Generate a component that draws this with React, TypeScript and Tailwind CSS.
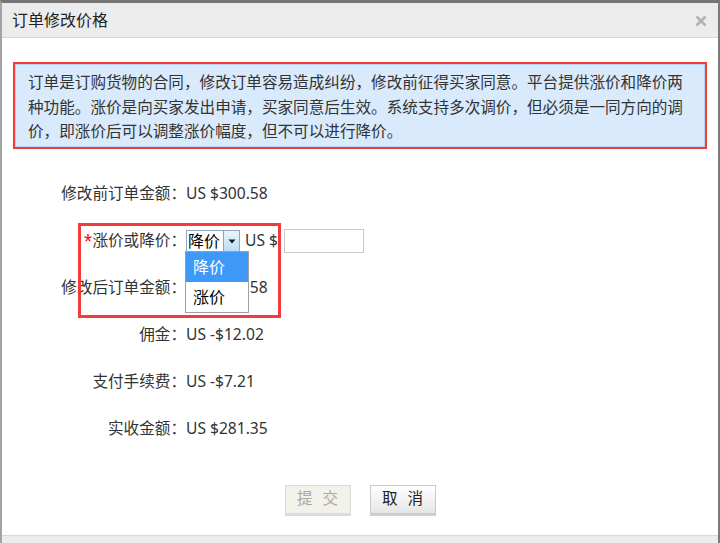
import { useState } from "react"

const rows = [
  { label: "修改前订单金额：", value: "US $300.58" },
  { label: "修改后订单金额：", value: "US $300.58" },
  { label: "佣金：", value: "US -$12.02" },
  { label: "支付手续费：", value: "US -$7.21" },
  { label: "实收金额：", value: "US $281.35" },
]

const App = () => {
  const [choice, setChoice] = useState("降价")
  const font = { fontFamily: '"Noto Sans", "Noto Sans CJK SC", sans-serif' }

  return (
    <div
      style={font}
      className="w-[720px] h-[543px] overflow-hidden flex flex-col bg-white text-[#333] border-t-[3px] border-t-[#757575] border-l-2 border-l-[#a3a3a3] border-r-2 border-r-[#7a7a7a]"
    >
      {/* header */}
      <div className="h-[35px] shrink-0 bg-[#ececec] border-b border-[#d9d9d9] flex items-center justify-between pl-[10px] pr-[11px]">
        <span className="text-[16px] text-[#222]">订单修改价格</span>
        <svg width="12" height="12" viewBox="0 0 12 12" className="mt-[2px]">
          <path d="M1.5 1.5 L10.5 10.5 M10.5 1.5 L1.5 10.5" stroke="#b3b3b3" strokeWidth="2.6" />
        </svg>
      </div>

      {/* body */}
      <div className="flex-1">
        <div className="mx-[11px] mt-[24px] border-2 border-[#f23b3b]">
          <div className="border border-[#b8d4ef] bg-[#d8eafc] pl-[12px] pr-[4px] pt-[5px] pb-[2px]">
            <p className="text-[15.6px] leading-[24.5px] w-[660px]">
              订单是订购货物的合同，修改订单容易造成纠纷，修改前征得买家同意。平台提供涨价和降价两种功能。涨价是向买家发出申请，买家同意后生效。系统支持多次调价，但必须是一同方向的调价，即涨价后可以调整涨价幅度，但不可以进行降价。
            </p>
          </div>
        </div>

        <div className="mt-[22px] text-[15.6px]">
          <div className="h-[47px] flex items-center">
            <span className="w-[184px] text-right">{rows[0].label}</span>
            <span>{rows[0].value}</span>
          </div>

          <div className="h-[47px] flex items-center relative">
            <span className="w-[184px] text-right">
              <span className="text-[#f00]">*</span>涨价或降价：
            </span>
            <div className="w-[54px] h-[22px] border border-[#8fa7bf] flex items-stretch bg-white">
              <span className="flex-1 text-[16px] leading-[20px] font-normal text-black pl-[1px]">{choice}</span>
              <span className="w-[16px] border-l border-[#7aa7cf] bg-gradient-to-b from-[#eaf5fd] to-[#bcdcf4] flex items-center justify-center">
                <svg width="8" height="5" viewBox="0 0 8 5">
                  <path d="M0.5 0.5 L7.5 0.5 L4 4.5 Z" fill="#1a1a1a" />
                </svg>
              </span>
            </div>
            <span className="ml-[5px]">US $</span>
            <input className="ml-[6px] w-[80px] h-[24px] border border-[#c8c8c8] outline-none" />

            {/* open dropdown */}
            <div className="absolute left-[183px] top-[33px] w-[64px] border border-[#a0a0a0] bg-white z-10 text-[16px]">
              {["降价", "涨价"].map((o) => (
                <div
                  key={o}
                  onClick={() => setChoice(o)}
                  className={
                    o === choice
                      ? "h-[30px] leading-[30px] pl-[7px] bg-[#3d98f8] text-white"
                      : "h-[30px] leading-[30px] pl-[7px] text-black"
                  }
                >
                  {o}
                </div>
              ))}
            </div>

            {/* red highlight */}
            <div className="absolute left-[76px] top-[5px] w-[203px] h-[95px] border-[3px] border-[#f33b3b] z-20 pointer-events-none" />
          </div>

          {rows.slice(1).map((r) => (
            <div key={r.label} className="h-[47px] flex items-center">
              <span className="w-[184px] text-right">{r.label}</span>
              <span>{r.value}</span>
            </div>
          ))}
        </div>

        <div className="mt-[32px] flex justify-center gap-[19px]">
          <button className="w-[66px] h-[29px] pl-[3px] tracking-[3px] border border-[#dcdcd4] bg-[#f3f2ea] text-[#a8a8a8] text-[15.6px] shadow-[0_2px_0_#dcdcdc]">
            提 交
          </button>
          <button className="w-[66px] h-[29px] pl-[3px] tracking-[3px] border border-[#c9c9c9] bg-gradient-to-b from-white to-[#e6e6e6] text-[#222] text-[15.6px] shadow-[0_2px_0_#d0d0d0]">
            取 消
          </button>
        </div>
      </div>

      {/* footer */}
      <div className="h-[8px] shrink-0 bg-[#ececec] border-t border-[#d9d9d9]" />
    </div>
  )
}

export default App
